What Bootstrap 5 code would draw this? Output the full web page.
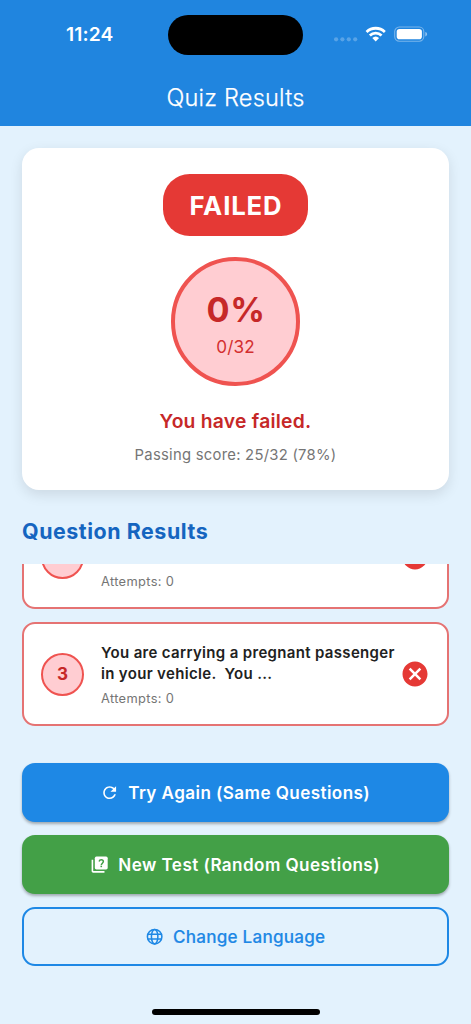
<!DOCTYPE html>
<html lang="en">
<head>
<meta charset="utf-8">
<meta name="viewport" content="width=device-width, initial-scale=1">
<title>Quiz Results</title>
<link href="https://cdn.jsdelivr.net/npm/bootstrap@5.3.0/dist/css/bootstrap.min.css" rel="stylesheet">
<style>
body{font-family:Inter,"Liberation Sans",sans-serif;background:#e3f2fd;color:#212121;width:471px;height:1024px;overflow:hidden;white-space:nowrap}
svg{display:block;flex:none}
.app-top{height:126.4px;background:#2085df;color:#fff}
.status{height:68px}
.status>*{position:absolute}
.clock{left:66px;top:22px;font-size:19.2px;line-height:24px;font-weight:600;letter-spacing:.1px}
.island{left:168px;top:15px;width:135px;height:39.5px;border-radius:20px;background:#000}
.signals{left:333px;top:24px}
.app-title{font-size:23.5px;line-height:30px;padding-top:15px;font-weight:300;letter-spacing:.22px;-webkit-text-stroke:.25px #fff}
.page-body{padding:21.6px 22px 0}
.score-panel{height:342.4px;background:#fff;border-radius:17px;box-shadow:0 4.3px 13px rgba(0,0,0,.1);padding-top:25.6px}
.verdict{width:144.6px;height:62.2px;border-radius:26.8px;background:#e53935;color:#fff;font-weight:700;font-size:25.7px;letter-spacing:.85px;padding:4px 0 0 1px}
.score-ring{width:128.5px;height:128.5px;border:4.3px solid #ef5350;background:#ffcdd2;color:#c62828;margin-top:21.3px}
.pct{font-size:34.2px;line-height:42px;font-weight:700;letter-spacing:.6px;margin:5px 0 0 1px}
.tally{font-size:17.1px;line-height:24px;letter-spacing:.1px;color:#d32f2f;margin-top:4px}
.outcome{font-size:19.3px;line-height:24px;font-weight:600;letter-spacing:.25px;color:#c62828;margin-top:23px}
.passing{font-size:14.8px;line-height:20px;letter-spacing:.27px;color:#757575;margin-top:12px}
.section-title{font-size:21.4px;line-height:28px;font-weight:700;letter-spacing:.55px;color:#1565c0;margin:27px 0 0}
.results{height:162px;margin-top:18.6px;gap:13px}
.result{height:103.9px;flex:none;background:#fff;border:2.1px solid #e57373;border-radius:13px;padding:0 17.5px 0 17px}
.num{width:43px;height:43px;flex:none;background:#ffcdd2;border:2.1px solid #ef5350;color:#c62828;font-size:17.1px;font-weight:700}
.q{margin-left:17px;width:298px;padding-top:2px}
.q-text{font-size:15px;line-height:21.4px;height:43px;font-weight:600;letter-spacing:.33px;white-space:pre}
.q-try{font-size:12.85px;line-height:18px;letter-spacing:.35px;color:#757575;margin-top:5px}
.actions{margin-top:37.4px;gap:13px}
.act{height:58.8px;border-radius:13px;border:0;color:#fff;font-size:17.1px;font-weight:600;letter-spacing:.42px;padding:0 1px 0 0;gap:9px;box-shadow:0 2px 3px rgba(0,0,0,.3)}
.act:hover{color:#fff}
.again{background:#1e88e5}
.fresh{background:#43a047}
.lang,.lang:hover{border:2.1px solid #1e88e5;color:#1e88e5;box-shadow:none;font-weight:500;letter-spacing:.22px;-webkit-text-stroke:.15px #1e88e5}
.home-bar{width:168px;height:5.8px;border-radius:3px;background:#000;margin:43.7px auto 0}
</style>
</head>
<body>
<header class="app-top">
  <div class="status position-relative">
    <span class="clock">11:24</span>
    <span class="island"></span>
    <svg class="signals" width="96" height="22" viewBox="0 0 96 22" fill="#fff">
      <g opacity=".25"><circle cx="3.1" cy="15.3" r="2.1"/><circle cx="9.4" cy="15.3" r="2.1"/><circle cx="15.8" cy="15.3" r="2.1"/><circle cx="22.2" cy="15.3" r="2.1"/></g>
      <path d="M32.6 6.900a14.6 14.6 0 0 1 20.2 0l-1.9 2.100a11.8 11.8 0 0 0-16.4 0zM35.9 10.400a9.8 9.8 0 0 1 13.6 0l-1.9 2.100a7 7 0 0 0-9.8 0zM39.300 14a5 5 0 0 1 6.800 0l-3.4 3.400z"/>
      <rect x="61.7" y="3" width="29.1" height="14.2" rx="4.6" fill="none" stroke="#fff" stroke-opacity=".4" stroke-width="1.1"/>
      <rect x="63.7" y="5" width="25.2" height="10.2" rx="2.8"/>
      <path d="M92.3 8c2.4.7 2.4 3.6 0 4.4z" opacity=".5"/>
    </svg>
  </div>
  <div class="app-title text-center">Quiz Results</div>
</header>
<main class="page-body">
  <section class="score-panel d-flex flex-column align-items-center">
    <div class="verdict d-flex align-items-center justify-content-center">FAILED</div>
    <div class="score-ring rounded-circle d-flex flex-column align-items-center justify-content-center">
      <div class="pct">0%</div><div class="tally">0/32</div>
    </div>
    <div class="outcome">You have failed.</div>
    <div class="passing">Passing score: 25/32 (78%)</div>
  </section>
  <h2 class="section-title">Question Results</h2>
  <div class="results d-flex flex-column justify-content-end overflow-hidden">
    <article class="result d-flex align-items-center">
      <div class="num rounded-circle"></div>
      <div class="q"><div class="q-text"></div><div class="q-try">Attempts: 0</div></div>
      <svg class="ms-auto" width="30" height="30" viewBox="0 0 24 24"><circle cx="12" cy="12" r="10" fill="#e53935"/></svg>
    </article>
    <article class="result d-flex align-items-center">
      <div class="num rounded-circle d-flex align-items-center justify-content-center">3</div>
      <div class="q"><div class="q-text">You are carrying a pregnant passenger
in your vehicle.  You ...</div><div class="q-try">Attempts: 0</div></div>
      <svg class="ms-auto" width="30" height="30" viewBox="0 0 24 24" fill="#e53935"><path d="M12 2C6.47 2 2 6.47 2 12s4.47 10 10 10 10-4.47 10-10S17.53 2 12 2zm5 13.59L15.59 17 12 13.41 8.41 17 7 15.59 10.59 12 7 8.41 8.41 7 12 10.59 15.59 7 17 8.41 13.41 12 17 15.59z"/></svg>
    </article>
  </div>
  <div class="actions d-flex flex-column">
    <button class="btn act again d-flex align-items-center justify-content-center">
      <svg width="19.3" height="19.3" viewBox="0 0 24 24" fill="currentColor"><path d="M17.65 6.35C16.2 4.9 14.21 4 12 4c-4.42 0-7.99 3.58-7.99 8s3.57 8 7.99 8c3.73 0 6.84-2.55 7.73-6h-2.08c-.82 2.33-3.04 4-5.65 4-3.31 0-6-2.69-6-6s2.69-6 6-6c1.66 0 3.14.69 4.22 1.78L13 11h7V4l-2.35 2.35z"/></svg>
      <span>Try Again (Same Questions)</span>
    </button>
    <button class="btn act fresh d-flex align-items-center justify-content-center">
      <svg width="19.3" height="19.3" viewBox="0 0 24 24" fill="currentColor"><path d="M4 6H2v14c0 1.100.9 2 2 2h14v-2H4V6z"/><rect x="6" y="2" width="16" height="16" rx="2"/><g fill="none" stroke="#43a047" stroke-width="1.9"><path d="M11.300 8.100c.4-1.400 1.400-2.100 2.700-2.100 1.500 0 2.600.9 2.600 2.200 0 1.900-2.500 2.200-2.500 4.200"/><path d="M13 14.200h2"/></g></svg>
      <span>New Test (Random Questions)</span>
    </button>
    <button class="btn act lang d-flex align-items-center justify-content-center">
      <svg width="19.3" height="19.3" viewBox="0 0 24 24" fill="none" stroke="currentColor" stroke-width="1.9"><circle cx="12" cy="12" r="9"/><ellipse cx="12" cy="12" rx="4" ry="9"/><path d="M3.600 9h16.800M3.600 15h16.800"/></svg>
      <span>Change Language</span>
    </button>
  </div>
  <div class="home-bar"></div>
</main>
<script src="https://cdn.jsdelivr.net/npm/bootstrap@5.3.0/dist/js/bootstrap.bundle.min.js"></script>
</body>
</html>
